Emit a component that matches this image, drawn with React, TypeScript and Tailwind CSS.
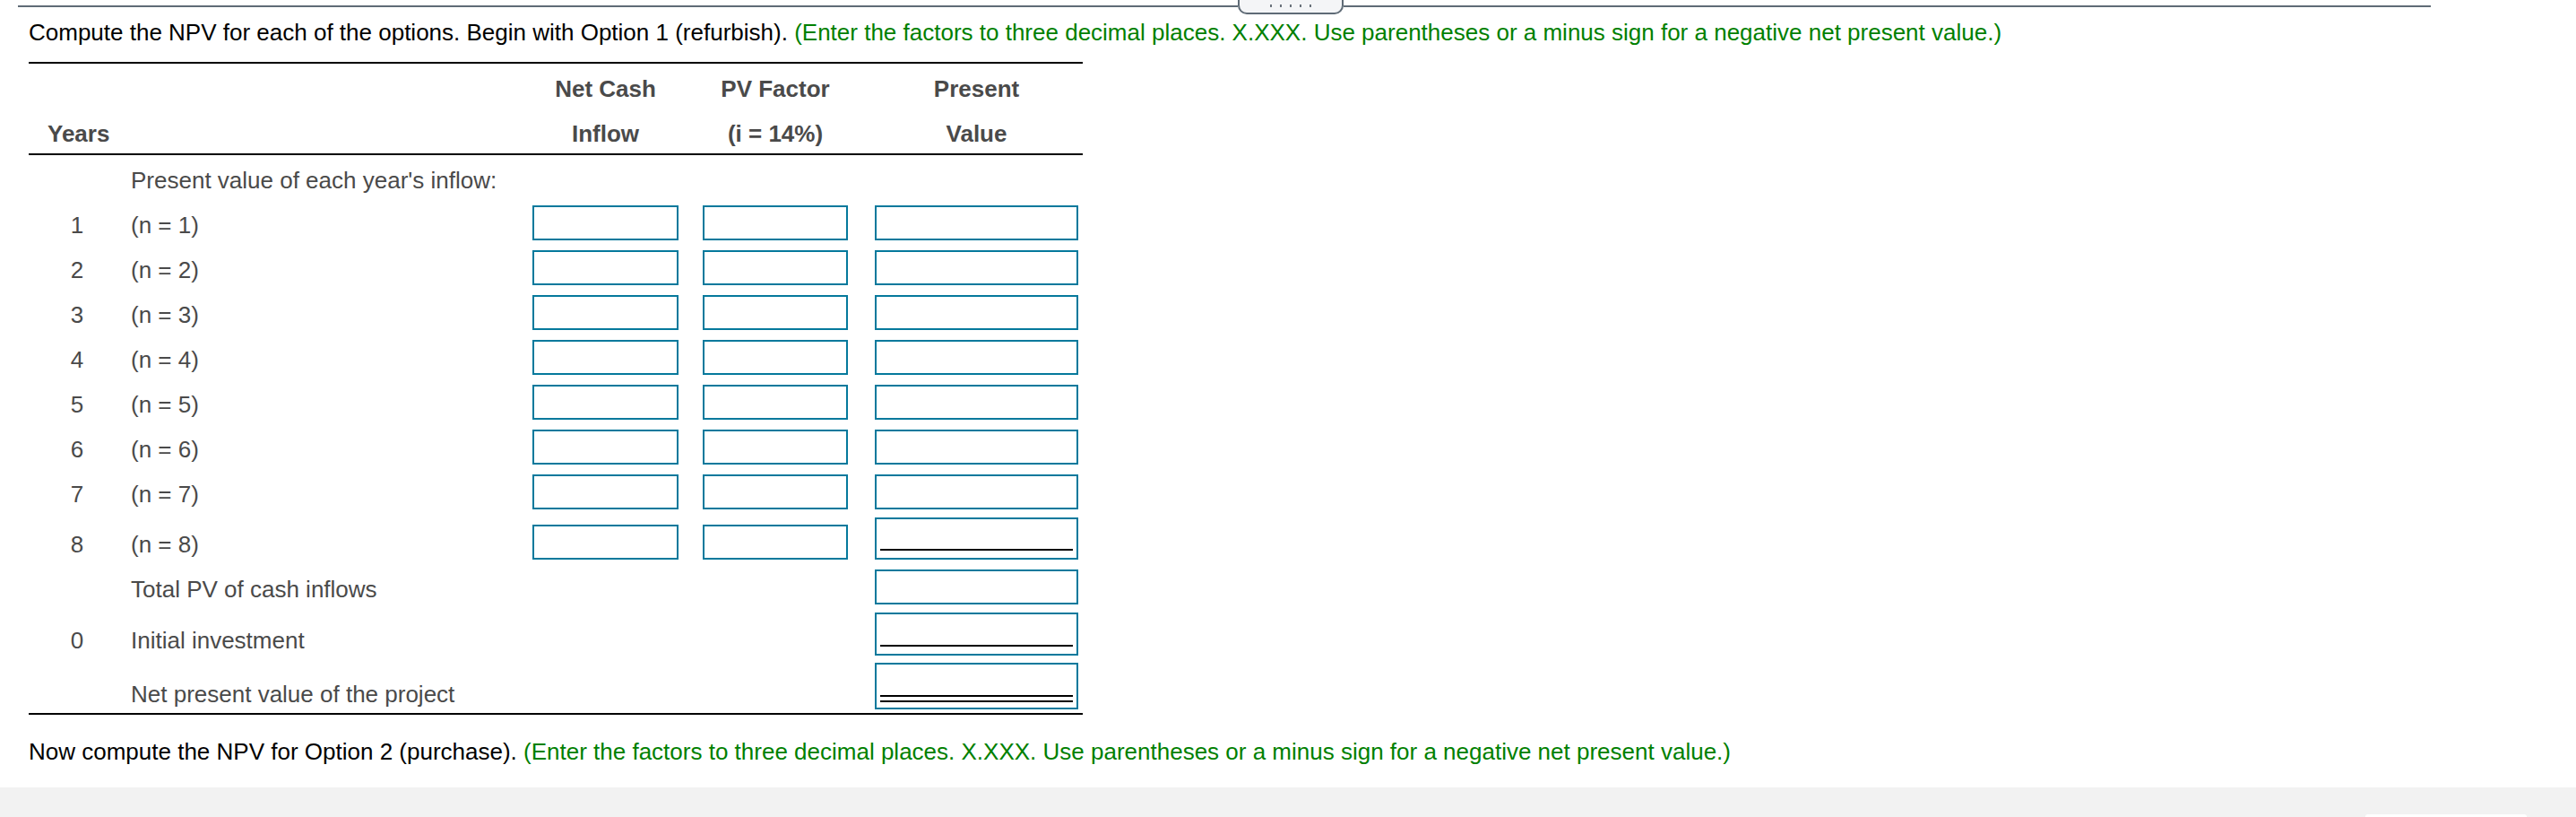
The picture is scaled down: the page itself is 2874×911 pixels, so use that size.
import React from 'react';

const hint =
  '(Enter the factors to three decimal places. X.XXX. Use parentheses or a minus sign for a negative net present value.)';

const years = [1, 2, 3, 4, 5, 6, 7];

function Box({ w, h = 'h-[39px]', lines = 0 }: { w: string; h?: string; lines?: number }) {
  // teal answer box, optional single / double rule inside
  return (
    <div className={`${w} ${h} border-2 border-[#05799c] bg-white flex flex-col justify-end px-[4px] ${lines === 2 ? 'pb-[6px]' : 'pb-[8px]'}`}>
      {lines >= 1 && <div className="h-[2px] bg-black" />}
      {lines === 2 && <div className="h-[2px] bg-black mt-[4px]" />}
    </div>
  );
}

function Row({
  year,
  label,
  cells,
  className,
}: {
  year?: string;
  label: string;
  cells: React.ReactNode[];
  className: string;
}) {
  return (
    <div className={`flex items-end ${className}`}>
      <div className="w-[114px] pr-[6px] text-center leading-[30px] pb-[2px]">{year}</div>
      <div className="w-[448px] leading-[30px] pb-[2px]">{label}</div>
      <div className="w-[190px]">{cells[0]}</div>
      <div className="w-[192px]">{cells[1]}</div>
      <div className="w-[232px]">{cells[2]}</div>
    </div>
  );
}

export default function App() {
  return (
    <div className="w-[2874px] h-[911px] flex flex-col bg-white font-['Liberation_Sans',Arial,sans-serif] text-[26px] overflow-hidden">
      {/* top divider with grab handle */}
      <div className="flex items-start h-[16px] pl-[20px] pr-[162px]">
        <div className="w-[1361px] h-[2px] mt-[6px] bg-[#5f6b76]" />
        <div className="w-[118px] h-[16px] border-2 border-t-0 border-[#5f6b76] rounded-b-[10px] bg-[#f4f5f7] flex items-start justify-center gap-[9px] pt-[5px]">
          <span className="w-[2px] h-[3px] bg-[#6b737b]" />
          <span className="w-[2px] h-[3px] bg-[#6b737b]" />
          <span className="w-[2px] h-[3px] bg-[#6b737b]" />
          <span className="w-[2px] h-[3px] bg-[#6b737b]" />
          <span className="w-[2px] h-[3px] bg-[#6b737b]" />
        </div>
        <div className="flex-1 h-[2px] mt-[6px] bg-[#5f6b76]" />
      </div>

      <div className="pl-[32px] flex-1 flex flex-col">
        <p className="mt-[5px] leading-[30px] text-black whitespace-nowrap">
          Compute the NPV for each of the options. Begin with Option 1 (refurbish).{' '}
          <span className="text-[#008000]">{hint}</span>
        </p>

        <div className="mt-[18px] w-[1176px] border-t-2 border-b-2 border-black text-[#4a4a4a]">
          {/* header */}
          <div className="border-b-2 border-black pt-[13px] pb-[7px] font-bold">
            <div className="flex leading-[30px]">
              <div className="w-[562px]" />
              <div className="w-[190px]"><div className="w-[163px] text-center">Net Cash</div></div>
              <div className="w-[192px]"><div className="w-[162px] text-center">PV Factor</div></div>
              <div className="w-[232px]"><div className="w-[227px] text-center">Present</div></div>
            </div>
            <div className="flex leading-[30px] mt-[20px]">
              <div className="w-[562px] pl-[21px]">Years</div>
              <div className="w-[190px]"><div className="w-[163px] text-center">Inflow</div></div>
              <div className="w-[192px]"><div className="w-[162px] text-center">(i = 14%)</div></div>
              <div className="w-[232px]"><div className="w-[227px] text-center">Value</div></div>
            </div>
          </div>

          {/* body */}
          <div className="pb-[4px]">
            <div className="pl-[114px] pt-[13px] leading-[30px]">Present value of each year's inflow:</div>
            {years.map((y) => (
              <Row
                key={y}
                year={String(y)}
                label={`(n = ${y})`}
                className={y === 1 ? 'mt-[13px]' : 'mt-[11px]'}
                cells={[<Box w="w-[163px]" />, <Box w="w-[162px]" />, <Box w="w-[227px]" />]}
              />
            ))}
            <Row
              year="8"
              label="(n = 8)"
              className="mt-[9px]"
              cells={[<Box w="w-[163px]" />, <Box w="w-[162px]" />, <Box w="w-[227px]" h="h-[47px]" lines={1} />]}
            />
            <Row label="Total PV of cash inflows" className="mt-[11px]" cells={[null, null, <Box w="w-[227px]" />]} />
            <Row
              year="0"
              label="Initial investment"
              className="mt-[9px]"
              cells={[null, null, <Box w="w-[227px]" h="h-[48px]" lines={1} />]}
            />
            <Row
              label="Net present value of the project"
              className="mt-[8px]"
              cells={[null, null, <Box w="w-[227px]" h="h-[52px]" lines={2} />]}
            />
          </div>
        </div>

        <p className="mt-[26px] leading-[30px] text-black whitespace-nowrap">
          Now compute the NPV for Option 2 (purchase).{' '}
          <span className="text-[#008000]">{hint}</span>
        </p>
      </div>

      <div className="h-[33px] bg-[#f2f2f2] flex justify-end items-end pr-[55px]">
        <div className="w-[180px] h-[3px] bg-white rounded-t-[3px]" />
      </div>
    </div>
  );
}
